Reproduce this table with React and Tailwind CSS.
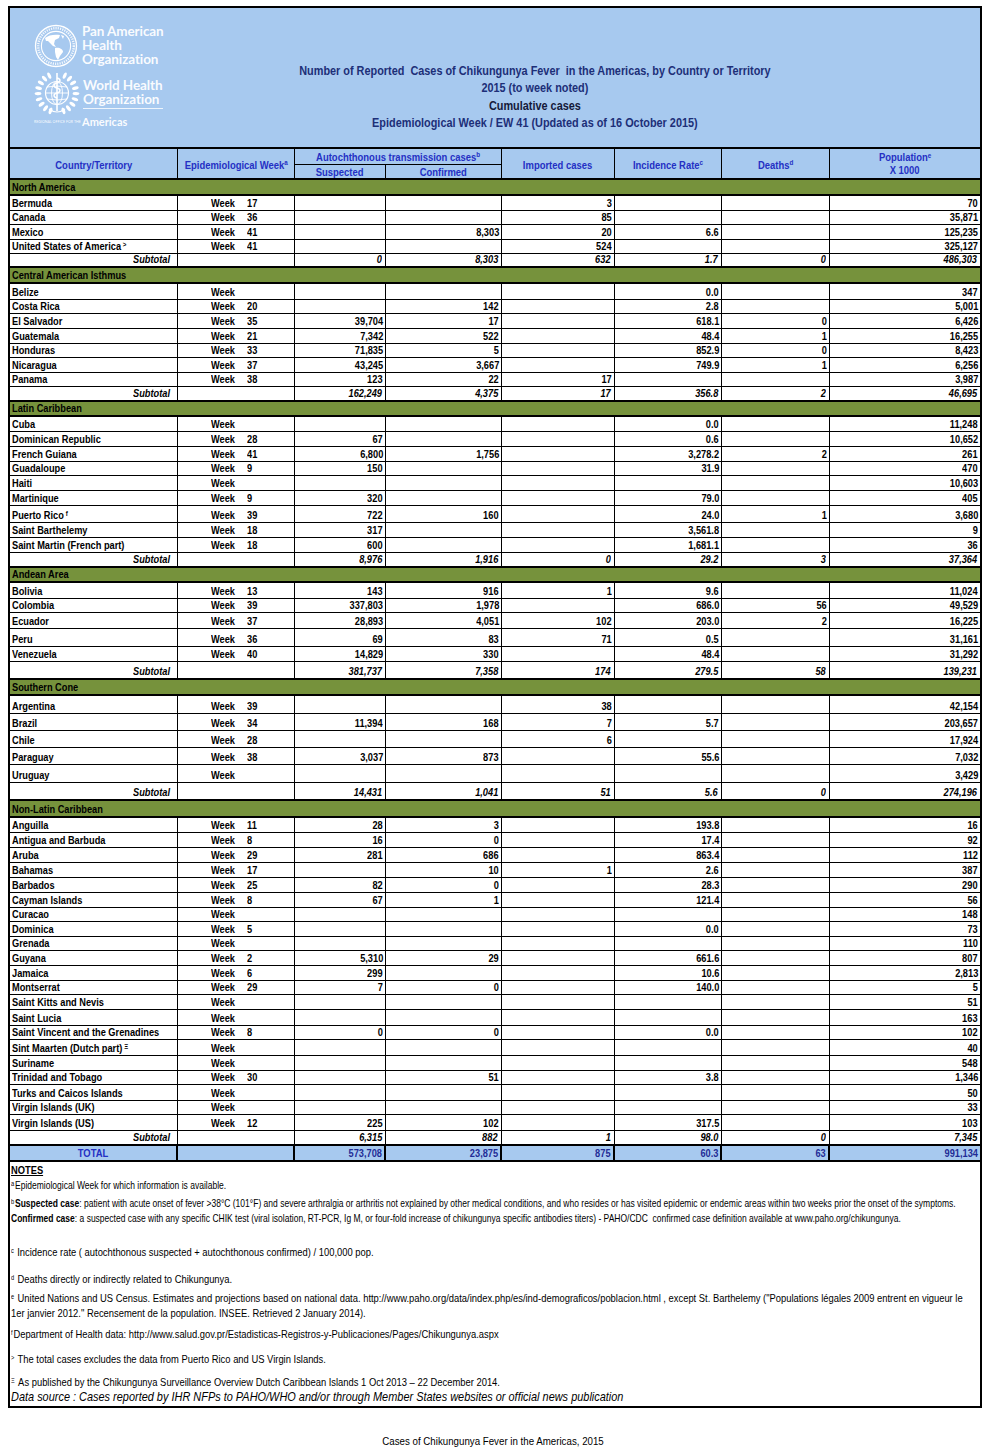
// Chikungunya cases table — PAHO/WHO weekly report sheet

const H = { 14: 'h-[14px]', 15: 'h-[15px]', 16: 'h-[16px]', 17: 'h-[17px]', 18: 'h-[18px]' }

// the sheet is set in a narrow face; squeeze Liberation Sans to match
const NL = 'inline-block whitespace-nowrap origin-left scale-x-[0.88]'
const NR = 'inline-block whitespace-nowrap origin-right scale-x-[0.88]'
const NC = 'inline-block whitespace-nowrap origin-center scale-x-[0.9]'

const SECTIONS = [
  {
    name: 'North America', h: 16,
    rows: [
      ['Bermuda', '17', '', '', '3', '', '', '70', 15],
      ['Canada', '36', '', '', '85', '', '', '35,871', 14],
      ['Mexico', '41', '', '8,303', '20', '6.6', '', '125,235', 15],
      ['United States of America', '41', '', '', '524', '', '', '325,127', 14, '>'],
    ],
    sub: ['0', '8,303', '632', '1.7', '0', '486,303', 14],
  },
  {
    name: 'Central American Isthmus', h: 16,
    rows: [
      ['Belize', '', '', '', '', '0.0', '', '347', 16],
      ['Costa Rica', '20', '', '142', '', '2.8', '', '5,001', 14],
      ['El Salvador', '35', '39,704', '17', '', '618.1', '0', '6,426', 15],
      ['Guatemala', '21', '7,342', '522', '', '48.4', '1', '16,255', 15],
      ['Honduras', '33', '71,835', '5', '', '852.9', '0', '8,423', 14],
      ['Nicaragua', '37', '43,245', '3,667', '', '749.9', '1', '6,256', 15],
      ['Panama', '38', '123', '22', '17', '', '', '3,987', 14],
    ],
    sub: ['162,249', '4,375', '17', '356.8', '2', '46,695', 15],
  },
  {
    name: 'Latin Caribbean', h: 15,
    rows: [
      ['Cuba', '', '', '', '', '0.0', '', '11,248', 15],
      ['Dominican Republic', '28', '67', '', '', '0.6', '', '10,652', 15],
      ['French Guiana', '41', '6,800', '1,756', '', '3,278.2', '2', '261', 15],
      ['Guadaloupe', '9', '150', '', '', '31.9', '', '470', 14],
      ['Haiti', '', '', '', '', '', '', '10,603', 15],
      ['Martinique', '9', '320', '', '', '79.0', '', '405', 15],
      ['Puerto Rico', '39', '722', '160', '', '24.0', '1', '3,680', 17, 'f'],
      ['Saint Barthelemy', '18', '317', '', '', '3,561.8', '', '9', 15],
      ['Saint Martin (French part)', '18', '600', '', '', '1,681.1', '', '36', 15],
    ],
    sub: ['8,976', '1,916', '0', '29.2', '3', '37,364', 15],
  },
  {
    name: 'Andean Area', h: 15,
    rows: [
      ['Bolivia', '13', '143', '916', '1', '9.6', '', '11,024', 16],
      ['Colombia', '39', '337,803', '1,978', '', '686.0', '56', '49,529', 14],
      ['Ecuador', '37', '28,893', '4,051', '102', '203.0', '2', '16,225', 16],
      ['Peru', '36', '69', '83', '71', '0.5', '', '31,161', 18],
      ['Venezuela', '40', '14,829', '330', '', '48.4', '', '31,292', 15],
    ],
    sub: ['381,737', '7,358', '174', '279.5', '58', '139,231', 18],
  },
  {
    name: 'Southern Cone', h: 16,
    rows: [
      ['Argentina', '39', '', '', '38', '', '', '42,154', 18],
      ['Brazil', '34', '11,394', '168', '7', '5.7', '', '203,657', 17],
      ['Chile', '28', '', '', '6', '', '', '17,924', 17],
      ['Paraguay', '38', '3,037', '873', '', '55.6', '', '7,032', 17],
      ['Uruguay', '', '', '', '', '', '', '3,429', 18],
    ],
    sub: ['14,431', '1,041', '51', '5.6', '0', '274,196', 18],
  },
  {
    name: 'Non-Latin Caribbean', h: 17,
    rows: [
      ['Anguilla', '11', '28', '3', '', '193.8', '', '16', 15],
      ['Antigua and Barbuda', '8', '16', '0', '', '17.4', '', '92', 15],
      ['Aruba', '29', '281', '686', '', '863.4', '', '112', 15],
      ['Bahamas', '17', '', '10', '1', '2.6', '', '387', 15],
      ['Barbados', '25', '82', '0', '', '28.3', '', '290', 15],
      ['Cayman Islands', '8', '67', '1', '', '121.4', '', '56', 15],
      ['Curacao', '', '', '', '', '', '', '148', 14],
      ['Dominica', '5', '', '', '', '0.0', '', '73', 15],
      ['Grenada', '', '', '', '', '', '', '110', 14],
      ['Guyana', '2', '5,310', '29', '', '661.6', '', '807', 15],
      ['Jamaica', '6', '299', '', '', '10.6', '', '2,813', 15],
      ['Montserrat', '29', '7', '0', '', '140.0', '', '5', 14],
      ['Saint Kitts and Nevis', '', '', '', '', '', '', '51', 15],
      ['Saint Lucia', '', '', '', '', '', '', '163', 16],
      ['Saint Vincent and the Grenadines', '8', '0', '0', '', '0.0', '', '102', 14],
      ['Sint Maarten (Dutch part)', '', '', '', '', '', '', '40', 16, 'Ξ'],
      ['Suriname', '', '', '', '', '', '', '548', 15],
      ['Trinidad and Tobago', '30', '', '51', '', '3.8', '', '1,346', 14],
      ['Turks and Caicos Islands', '', '', '', '', '', '', '50', 16],
      ['Virgin Islands (UK)', '', '', '', '', '', '', '33', 14],
      ['Virgin Islands (US)', '12', '225', '102', '', '317.5', '', '103', 16],
    ],
    sub: ['6,315', '882', '1', '98.0', '0', '7,345', 15],
  },
]

const TOTAL = ['573,708', '23,875', '875', '60.3', '63', '991,134']

// widths of the six number columns (suspected → population)
const NUM_W = ['w-[91px]', 'w-[116px]', 'w-[113px]', 'w-[107px]', 'w-[108px]', 'w-[150px]']

export default function App() {
  return (
    <div className="w-[996px] min-h-[1456px] bg-white text-black font-['Liberation_Sans',Arial,sans-serif]">
      <div className="pt-[6px] pl-[8px]">
        <div className="w-[974px] border-2 border-black">
          <TitleBlock />
          <ColumnHeader />
          {SECTIONS.map(s => (
            <Section key={s.name} section={s} />
          ))}
          <TotalRow />
          <Notes />
        </div>
      </div>
      <p className="mt-[25px] pr-[10px] text-center text-[10.8px]">
        <span className={NC}>Cases of Chikungunya Fever in the Americas, 2015</span>
      </p>
    </div>
  )
}

// ── Title / logo block ────────────────────────────────────────────────────────
function TitleBlock() {
  return (
    <div className="h-[141px] bg-[#a7c9ef] border-b-2 border-black flex">
      <Logo />
      <div className="flex-1 pr-[80px] pt-[55px] flex justify-center">
        <div className="text-center font-bold text-[12.5px] leading-[17.4px] text-[#1d2f78] origin-center scale-x-[0.87] whitespace-nowrap">
          <p className="whitespace-pre">Number of Reported  Cases of Chikungunya Fever  in the Americas, by Country or Territory</p>
          <p>2015 (to week noted)</p>
          <p className="text-[#15193a]">Cumulative cases</p>
          <p>Epidemiological Week / EW 41 (Updated as of 16 October 2015)</p>
        </div>
      </div>
    </div>
  )
}

function Logo() {
  const leaves = []
  for (let i = 0; i < 9; i++) {
    const a = (110 + i * 17) * Math.PI / 180
    const cx = 23 + 19 * Math.cos(a)
    const cy = 24 + 19 * Math.sin(a)
    const rot = (110 + i * 17) + 90
    leaves.push(<ellipse key={'l' + i} cx={cx} cy={cy} rx="1.6" ry="3.4" transform={`rotate(${rot} ${cx} ${cy})`} fill="white" />)
    const cx2 = 46 - cx
    leaves.push(<ellipse key={'r' + i} cx={cx2} cy={cy} rx="1.6" ry="3.4" transform={`rotate(${-rot} ${cx2} ${cy})`} fill="white" />)
  }

  return (
    <div className="w-[160px] pl-[24px] pt-[15px] text-white/95 font-['Lato','Open_Sans',sans-serif] font-bold">
      <div className="flex items-start gap-[4px]">
        <svg width="44" height="44" viewBox="0 0 44 44" className="shrink-0 mt-[1px]">
          <circle cx="22" cy="22" r="20.5" fill="none" stroke="white" strokeWidth="1.3" />
          <circle cx="22" cy="22" r="17.8" fill="none" stroke="white" strokeWidth="2.4" strokeDasharray="1.2 1.1" opacity="0.85" />
          <circle cx="22" cy="22" r="14.6" fill="none" stroke="white" strokeWidth="1.1" />
          <path d="M11 14 C14 11 21 10 26 11 L25 14 L21 16 L20 20 L22 23 L19 22 L16 19 L14 17 L12 17 Z" fill="white" />
          <path d="M21 24 C25 23 29 25 29 28 L26 32 L24 36 L22 33 L21 28 Z" fill="white" />
          <path d="M27 11 L30 12 L29 15 Z" fill="white" />
        </svg>
        <div className="text-[13.5px] leading-[14px] tracking-[-0.1px] pt-[1px]">
          <div>Pan American</div>
          <div>Health</div>
          <div>Organization</div>
        </div>
      </div>
      <div className="flex items-start gap-[3px] mt-[1px]">
        <svg width="46" height="48" viewBox="0 0 46 48" className="shrink-0">
          {leaves}
          <circle cx="23" cy="24" r="11.5" fill="none" stroke="white" strokeWidth="1.2" />
          <ellipse cx="23" cy="24" rx="5.5" ry="11.5" fill="none" stroke="white" strokeWidth="0.9" />
          <line x1="11.5" y1="24" x2="34.5" y2="24" stroke="white" strokeWidth="0.9" />
          <path d="M13 18 Q23 16 33 18 M13 30 Q23 32 33 30" fill="none" stroke="white" strokeWidth="0.9" />
          <line x1="23" y1="4" x2="23" y2="42" stroke="white" strokeWidth="1.6" />
          <path d="M23 9 C27 10 27 13 23 14 C19 15 19 18 23 19 C27 20 27 23 23 24 C19 25 19 28 23 29" fill="none" stroke="white" strokeWidth="1.4" />
          <path d="M15 40 Q23 46 31 40" fill="none" stroke="white" strokeWidth="1.2" />
        </svg>
        <div className="pt-[9px]">
          <div className="text-[13.5px] leading-[14px] tracking-[-0.1px]">World Health</div>
          <div className="text-[13.5px] leading-[14px] tracking-[-0.1px]">Organization</div>
          <div className="mt-[2px] w-[80px] border-t border-white/80" />
        </div>
      </div>
      <div className="flex items-center mt-[-1px]">
        <span className="w-[47px] mr-[1px] overflow-hidden text-[3.6px] leading-[6px] font-normal whitespace-nowrap">REGIONAL OFFICE FOR THE</span>
        <span className="text-[11px] leading-[12px]">Americas</span>
      </div>
    </div>
  )
}

// ── Column header row ─────────────────────────────────────────────────────────
function ColumnHeader() {
  return (
    <div className="h-[31px] bg-[#a7c9ef] border-b-2 border-black flex font-bold text-[10.5px] text-[#2430c4] leading-[12px]">
      <div className="w-[168px] border-r border-black flex items-center justify-center pt-[2px]">
        <span className={NC}>Country/Territory</span>
      </div>
      <div className="w-[117px] border-r border-black flex items-center justify-center pt-[2px]">
        <span className={NC}>Epidemiological Week<sup className="text-[7px]">a</sup></span>
      </div>
      <div className="w-[207px] border-r border-black flex flex-col">
        <div className="h-[16px] border-b border-black flex items-center justify-center">
          <span className={NC}>Autochthonous transmission cases<sup className="text-[7px]">b</sup></span>
        </div>
        <div className="flex-1 flex">
          <div className="w-[91px] border-r border-black flex items-center justify-center">
            <span className={NC}>Suspected</span>
          </div>
          <div className="flex-1 flex items-center justify-center">
            <span className={NC}>Confirmed</span>
          </div>
        </div>
      </div>
      <div className="w-[113px] border-r border-black flex items-center justify-center pt-[2px]">
        <span className={NC}>Imported cases</span>
      </div>
      <div className="w-[107px] border-r border-black flex items-center justify-center pt-[2px]">
        <span className={NC}>Incidence Rate<sup className="text-[7px]">c</sup></span>
      </div>
      <div className="w-[108px] border-r border-black flex items-center justify-center pt-[2px]">
        <span className={NC}>Deaths<sup className="text-[7px]">d</sup></span>
      </div>
      <div className="flex-1 flex flex-col items-center justify-center leading-[13px] pt-[1px]">
        <span className={NC}>Population<sup className="text-[7px]">e</sup></span>
        <span className={NC}>X 1000</span>
      </div>
    </div>
  )
}

// ── Region section ────────────────────────────────────────────────────────────
function Section({ section }) {
  return (
    <>
      <div className={`${H[section.h]} bg-[#76923c] border-b-2 border-black flex items-end pl-[2px] pb-[1px] font-bold text-[10.5px] leading-[12px]`}>
        <span className={NL}>{section.name}</span>
      </div>
      {section.rows.map(r => (
        <DataRow key={r[0]} row={r} />
      ))}
      <SubtotalRow values={section.sub} />
    </>
  )
}

function DataRow({ row }) {
  const [name, week, ...rest] = row
  const nums = rest.slice(0, 6)
  const h = rest[6]
  const sup = rest[7]
  return (
    <div className={`${H[h]} border-b border-black flex font-bold text-[10.5px] leading-[12px]`}>
      <div className="w-[168px] border-r border-black flex items-end pl-[2px] pb-[1px] overflow-hidden">
        <span className={NL}>
          {name}
          {sup && <sup className="text-[7px] ml-[2px]">{sup}</sup>}
        </span>
      </div>
      <div className="w-[117px] border-r border-black flex items-end pb-[1px]">
        <span className={`${NL} ml-[33px] w-[36px]`}>Week</span>
        <span className={NL}>{week}</span>
      </div>
      {nums.map((v, i) => (
        <div
          key={i}
          className={`${NUM_W[i]} ${i < 5 ? 'border-r border-black' : ''} flex items-end justify-end pr-[2px] pb-[1px]`}
        >
          <span className={NR}>{v}</span>
        </div>
      ))}
    </div>
  )
}

function SubtotalRow({ values }) {
  const nums = values.slice(0, 6)
  const h = values[6]
  return (
    <div className={`${H[h]} border-b-2 border-black flex font-bold italic text-[10.5px] leading-[12px]`}>
      <div className="w-[168px] border-r border-black flex items-end justify-end pr-[7px] pb-[1px]">
        <span className={NR}>Subtotal</span>
      </div>
      <div className="w-[117px] border-r border-black" />
      {nums.map((v, i) => (
        <div
          key={i}
          className={`${NUM_W[i]} ${i < 5 ? 'border-r border-black' : ''} flex items-end justify-end pr-[3px] pb-[1px]`}
        >
          <span className={NR}>{v}</span>
        </div>
      ))}
    </div>
  )
}

function TotalRow() {
  return (
    <div className="h-[16px] bg-[#a7c9ef] border-b-2 border-black flex font-bold text-[10.5px] leading-[12px] text-[#1f2c96]">
      <div className="w-[168px] border-r-2 border-black flex items-end justify-center pb-[1px] text-[#2430c4]">
        <span className={NC}>TOTAL</span>
      </div>
      <div className="w-[117px] border-r-2 border-black" />
      {TOTAL.map((v, i) => (
        <div
          key={i}
          className={`${NUM_W[i]} ${i < 5 ? 'border-r-2 border-black' : ''} flex items-end justify-end pr-[2px] pb-[1px]`}
        >
          <span className={NR}>{v}</span>
        </div>
      ))}
    </div>
  )
}

// ── Notes ─────────────────────────────────────────────────────────────────────
function Sup({ children }) {
  return <sup className="text-[7px] mr-[1px]">{children}</sup>
}

function Notes() {
  return (
    <div className="h-[244px] pl-[1px] overflow-hidden">
      <div className="w-[1190px] origin-left scale-x-[0.81] text-[10.5px] leading-[14px] whitespace-nowrap">
        <p className="mt-[1px] h-[14px] font-bold underline text-[11.5px]">NOTES</p>
        <p className="mt-[1px] h-[14px]"><Sup>a</Sup>Epidemiological Week for which information is available.</p>
        <p className="mt-[4px] h-[14px]">
          <Sup>b</Sup><b>Suspected case</b>: patient with acute onset of fever &gt;38°C (101°F) and severe arthralgia or arthritis not explained by other medical conditions, and who resides or has visited epidemic or endemic areas within two weeks prior the onset of the symptoms.
        </p>
        <p className="mt-[1px] h-[14px]">
          <b>Confirmed case</b>: a suspected case with any specific CHIK test (viral isolation, RT-PCR, Ig M, or four-fold increase of chikungunya specific antibodies titers) - PAHO/CDC&nbsp; confirmed case definition available at www.paho.org/chikungunya.
        </p>
        <div className="text-[11.6px]">
          <p className="mt-[20px] h-[14px]"><Sup>c</Sup> Incidence rate ( autochthonous suspected + autochthonous confirmed) / 100,000 pop.</p>
          <p className="mt-[13px] h-[14px]"><Sup>d</Sup> Deaths directly or indirectly related to Chikungunya.</p>
          <p className="mt-[5px] h-[14px]">
            <Sup>e</Sup> United Nations and US Census. Estimates and projections based on national data. http://www.paho.org/data/index.php/es/ind-demograficos/poblacion.html , except St. Barthelemy ("Populations légales 2009 entrent en vigueur le
          </p>
          <p className="mt-[1px] h-[14px]">1er janvier 2012." Recensement de la population. INSEE. Retrieved 2 January 2014).</p>
          <p className="mt-[7px] h-[14px]"><Sup>f</Sup>Department of Health data: http://www.salud.gov.pr/Estadisticas-Registros-y-Publicaciones/Pages/Chikungunya.aspx</p>
          <p className="mt-[11px] h-[14px]"><Sup>&gt;</Sup> The total cases excludes the data from Puerto Rico and US Virgin Islands.</p>
          <p className="mt-[9px] h-[14px]"><Sup>Ξ</Sup> As published by the Chikungunya Surveillance Overview Dutch Caribbean Islands 1 Oct 2013 – 22 December 2014.</p>
        </div>
        <p className="mt-[1px] h-[14px] italic text-[13.5px] leading-[14px]">
          Data source : Cases reported by IHR NFPs to PAHO/WHO and/or through Member States websites or official news publication
        </p>
      </div>
    </div>
  )
}
